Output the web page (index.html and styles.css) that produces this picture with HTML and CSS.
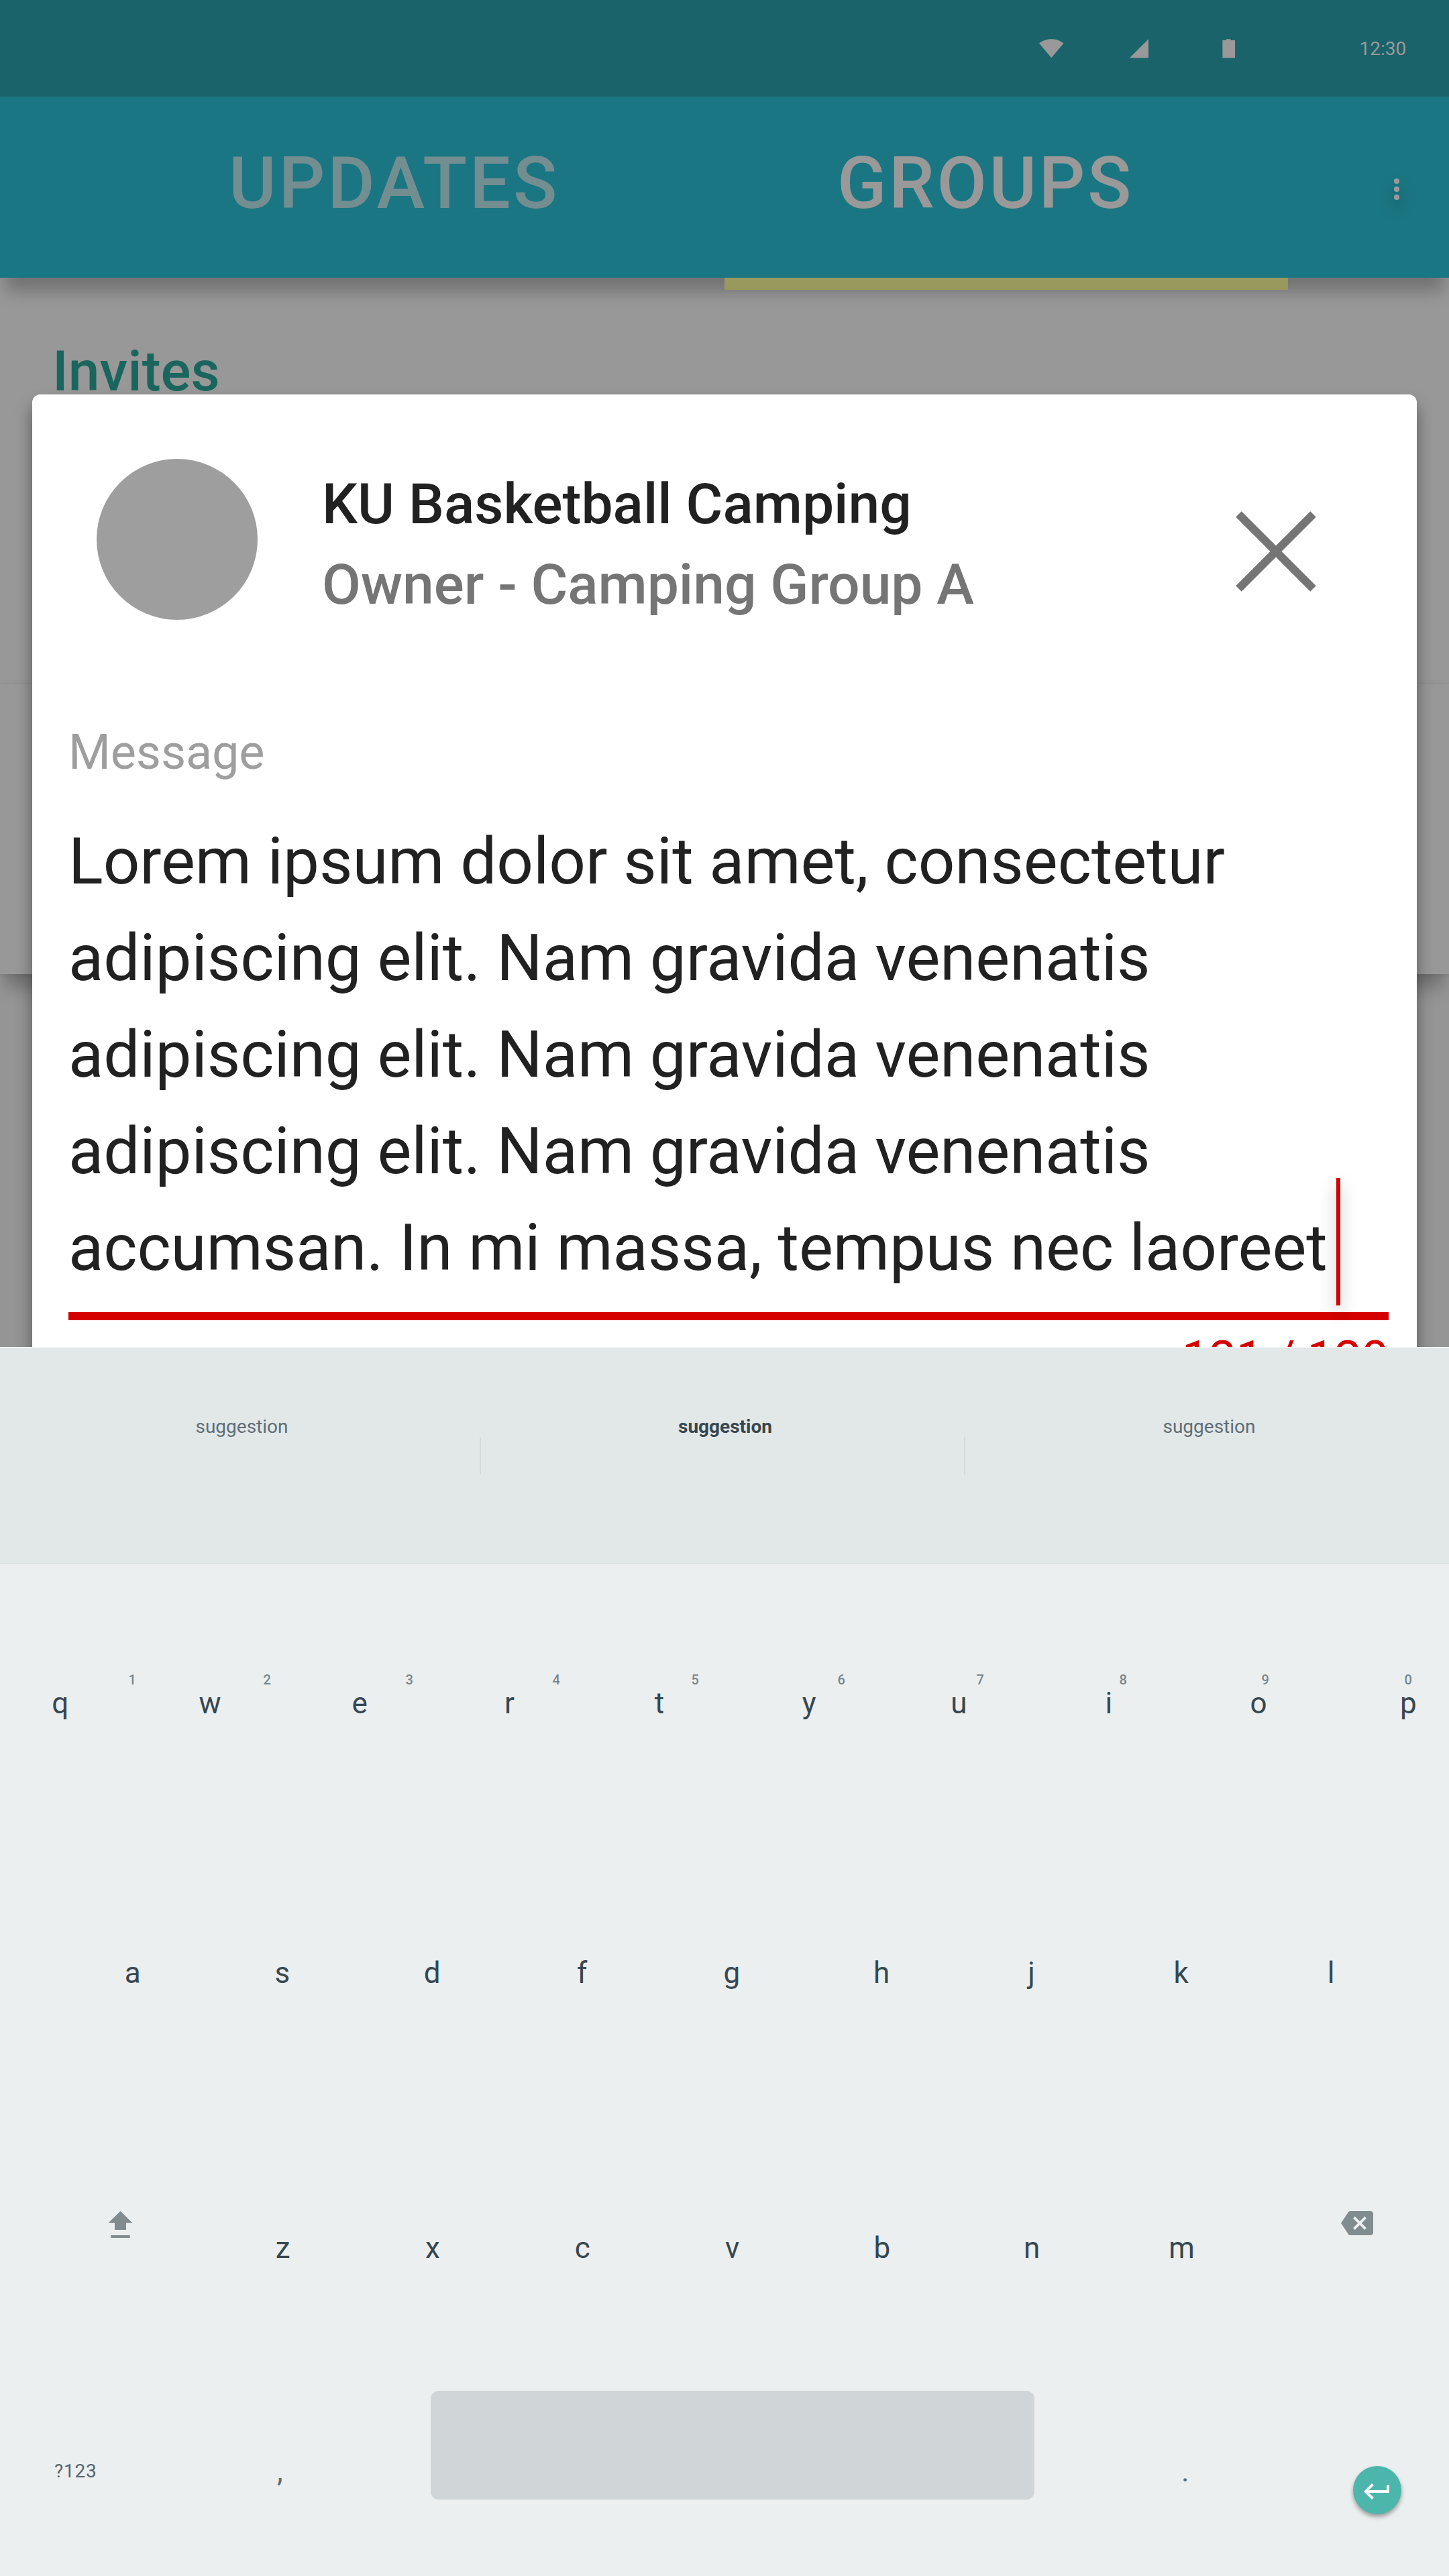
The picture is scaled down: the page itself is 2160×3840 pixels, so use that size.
FILE: index.html
```html
<!DOCTYPE html>
<html lang="en">
<head>
<meta charset="utf-8">
<title>Groups</title>
<link rel="stylesheet" href="styles.css">
</head>
<body>
<div class="screen">
  <header class="status-bar">
    <svg class="wifi" width="37" height="29" viewBox="0 0 37 29"><path d="M0 6.500C5 2.500 11 .2 18.300 .2S31.500 2.500 36.500 6.500L18.300 28.300z"/></svg>
    <svg class="signal" width="29" height="29" viewBox="0 0 29 29"><path d="M0 28.300H28V.3z"/></svg>
    <svg class="battery" width="20" height="29" viewBox="0 0 20 29"><path d="M.4 2H6V.2h6.500V2H19v26.300H.4z"/></svg>
    <span class="clock">12:30</span>
  </header>
  <nav class="tabs">
    <span class="tab tab-updates">UPDATES</span>
    <span class="tab tab-groups">GROUPS</span>
    <svg class="more" width="12" height="36" viewBox="0 0 12 36"><circle cx="6" cy="6" r="4.100"/><circle cx="6" cy="18" r="4.100"/><circle cx="6" cy="30" r="4.100"/></svg>
    <span class="indicator"></span>
  </nav>
  <main class="list">
    <section class="invites"><h2 class="list-title">Invites</h2></section>
    <section class="invite-card"></section>
  </main>

  <section class="dialog">
    <header class="dialog-head">
      <span class="avatar"></span>
      <div class="group">
        <h1 class="group-name">KU Basketball Camping</h1>
        <p class="group-role">Owner - Camping Group A</p>
      </div>
      <svg class="close" width="120" height="120" viewBox="0 0 120 120"><path d="M4.500 4.500l111 111M115.500 4.500l-111 111"/></svg>
    </header>
    <div class="field">
      <span class="field-label">Message</span>
      <p class="field-text">Lorem ipsum dolor sit amet, consectetur<br>adipiscing elit. Nam gravida venenatis<br>adipiscing elit. Nam gravida venenatis<br>adipiscing elit. Nam gravida venenatis<br>accumsan. In mi massa, tempus nec laoreet</p>
      <span class="caret"></span>
      <span class="counter">121 / 120</span>
    </div>
  </section>

  <section class="keyboard">
    <div class="suggestions">
      <span class="suggestion">suggestion</span>
      <span class="divider"></span>
      <span class="suggestion suggestion-main">suggestion</span>
      <span class="divider"></span>
      <span class="suggestion">suggestion</span>
    </div>
    <div class="hints"><span>1</span><span>2</span><span>3</span><span>4</span><span>5</span><span>6</span><span>7</span><span>8</span><span>9</span><span>0</span></div>
    <div class="keys keys-top"><span>q</span><span>w</span><span>e</span><span>r</span><span>t</span><span>y</span><span>u</span><span>i</span><span>o</span><span>p</span></div>
    <div class="keys keys-home"><span>a</span><span>s</span><span>d</span><span>f</span><span>g</span><span>h</span><span>j</span><span>k</span><span>l</span></div>
    <div class="row-lower">
      <svg class="shift" width="37" height="41" viewBox="0 0 37 41"><path d="M18.500 0L36.500 17.800H27V28H10V17.800H.5zM4.300 36h28.400v4H4.300z"/></svg>
      <div class="keys keys-lower"><span>z</span><span>x</span><span>c</span><span>v</span><span>b</span><span>n</span><span>m</span></div>
      <svg class="backspace" width="48" height="48" viewBox="0 0 24 24"><path d="M22 3H7c-.69 0-1.230.35-1.590.88L0 12l5.410 8.110c.36.53.9.89 1.590.89h15c1.100 0 2-.9 2-2V5c0-1.100-.9-2-2-2zm-3 12.590L17.590 17 14 13.410 10.410 17 9 15.590 12.590 12 9 8.410 10.410 7 14 10.590 17.590 7 19 8.410 15.410 12 19 15.590z"/></svg>
    </div>
    <div class="row-bottom">
      <span class="symbols">?123</span>
      <span class="punct comma">,</span>
      <span class="space"></span>
      <span class="punct period">.</span>
      <span class="enter"><svg width="48" height="48" viewBox="0 0 24 24"><path d="M19 7v4H5.830l3.580-3.590L8 6l-6 6 6 6 1.410-1.410L5.830 13H21V7z"/></svg></span>
    </div>
  </section>
</div>
</body>
</html>
```
FILE: styles.css
```css
* { box-sizing: border-box; margin: 0; padding: 0; }
body { font-family: Roboto, "Liberation Sans", sans-serif; font-weight: 400; }
svg { display: block; flex: none; }
.screen { position: relative; width: 2160px; height: 3840px; overflow: hidden; background: #959595; }

/* Dimmed page behind the dialog */
.status-bar { display: flex; align-items: flex-start; height: 144px; padding: 57.800px 0 0 1549px; background: #1a636b; }
.status-bar svg { fill: #999; }
.signal { margin-left: 98px; }
.battery { margin-left: 109px; }
.clock { margin: -1px 0 0 184.500px; font-size: 28px; line-height: 32px; color: #999; }
.tabs { position: relative; z-index: 1; display: flex; align-items: flex-start; height: 270px; padding-top: 69px; background: #1b7683; box-shadow: 0 28px 24px -8px rgba(0,0,0,.25); }
.tab { font-size: 108px; font-weight: 500; line-height: 120px; letter-spacing: 3.500px; white-space: nowrap; }
.tab-updates { width: 907px; margin-left: 341px; letter-spacing: 3.850px; color: #738e91; }
.tab-groups { width: 828px; color: #999; }
.more { margin-top: 51px; fill: #999; filter: drop-shadow(0 12px 10px rgba(0,0,0,.3)); overflow: visible; }
.indicator { position: absolute; left: 1080px; top: 270px; width: 840px; height: 18px; background: #99985d; }
.invites { height: 606px; padding: 92px 0 0 78px; background: #989898; }
.list-title { font-size: 84px; font-weight: 500; line-height: 96px; color: #1a665e; }
.invite-card { height: 432px; background: #989898; box-shadow: 0 28px 24px -8px rgba(0,0,0,.25), 0 0 8px rgba(0,0,0,.1); }

/* Message dialog */
.dialog { position: absolute; left: 48px; top: 588px; width: 2064px; height: 1600px; padding: 96px 42px 0 54px; border-radius: 12px; background: #fff; box-shadow: 0 16px 24px rgba(0,0,0,.42); }
.dialog-head { display: flex; align-items: flex-start; height: 396px; padding-left: 42px; }
.avatar { width: 240px; height: 240px; border-radius: 50%; background: #9e9e9e; }
.group { width: 1362px; margin: 8px 0 0 96px; font-size: 84px; font-weight: 500; line-height: 120px; white-space: nowrap; }
.group-name { font-size: inherit; font-weight: inherit; color: #212121; }
.group-role { letter-spacing: -.05px; color: #757575; }
.close { margin-top: 78px; fill: none; stroke: #757575; stroke-width: 12; }
.field { position: relative; display: flex; flex-direction: column; }
.field-label { font-size: 72px; line-height: 84px; letter-spacing: -.1px; color: #9e9e9e; }
.field-text { height: 803.500px; padding-top: 48px; border-bottom: 12px solid #d50000; font-size: 96px; line-height: 144px; letter-spacing: -.04px; color: #212121; white-space: nowrap; }
.caret { position: absolute; left: 1890px; top: 676px; width: 6px; height: 190px; background: #d50000; box-shadow: 0 12px 24px rgba(0,0,0,.35); }
.counter { margin-top: 16px; font-size: 72px; line-height: 84px; text-align: right; color: #d50000; }

/* Keyboard */
.keyboard { position: absolute; left: 0; top: 2008px; width: 2160px; height: 1832px; overflow: hidden; background: #ebeff0; color: #37474f; }
.suggestions { display: grid; grid-template-columns: 715px 2px 720px 2px 721px; height: 323px; border-top: 1px solid #f6f7f7; border-bottom: 1px solid #d9dddd; background: #e2e7e8; }
.suggestion { padding: 98px 0 0 6px; font-size: 28px; line-height: 40px; text-align: center; color: #5f6e74; }
.suggestion-main { padding-left: 8px; font-weight: 700; color: #37474f; }
.divider { height: 56px; margin-top: 133px; background: #d4d9da; }
.hints { display: grid; grid-template-columns: 201px 212px 219px 207px 218px 207px 213px 212px 213px 20px; margin-top: 161px; padding-left: 191.500px; font-size: 20px; font-weight: 500; line-height: 24px; color: #78878e; }
.keys { display: flex; font-size: 44px; line-height: 60px; text-align: center; }
.keys span { flex: none; width: 223.300px; }
.keys-top { margin: -7px 0 0 -22px; }
.keys-home { margin: 342px 0 0 86px; }
.row-lower { display: flex; align-items: flex-start; height: 274px; margin-top: 319px; padding-left: 161px; fill: #808c90; }
.shift { margin-top: 6px; }
.keys-lower { margin: 31px 126px 0 112px; }
.row-bottom { display: flex; align-items: flex-start; height: 276px; padding-left: 81px; color: #5f6e74; }
.symbols { width: 332px; padding-top: 104px; font-size: 28px; line-height: 32px; letter-spacing: .8px; color: #56666d; }
.punct { padding-top: 90px; font-size: 44px; line-height: 60px; }
.comma { width: 229px; }
.space { width: 900px; height: 162px; border-radius: 12px; background: #d0d5d7; }
.period { width: 256px; margin-left: 219px; }
.enter { display: flex; align-items: center; justify-content: center; width: 72px; height: 72px; margin-top: 112px; padding-top: 4px; border-radius: 50%; background: #4db6ac; fill: #fff; box-shadow: 0 4px 6px rgba(0,0,0,.35); }
```
